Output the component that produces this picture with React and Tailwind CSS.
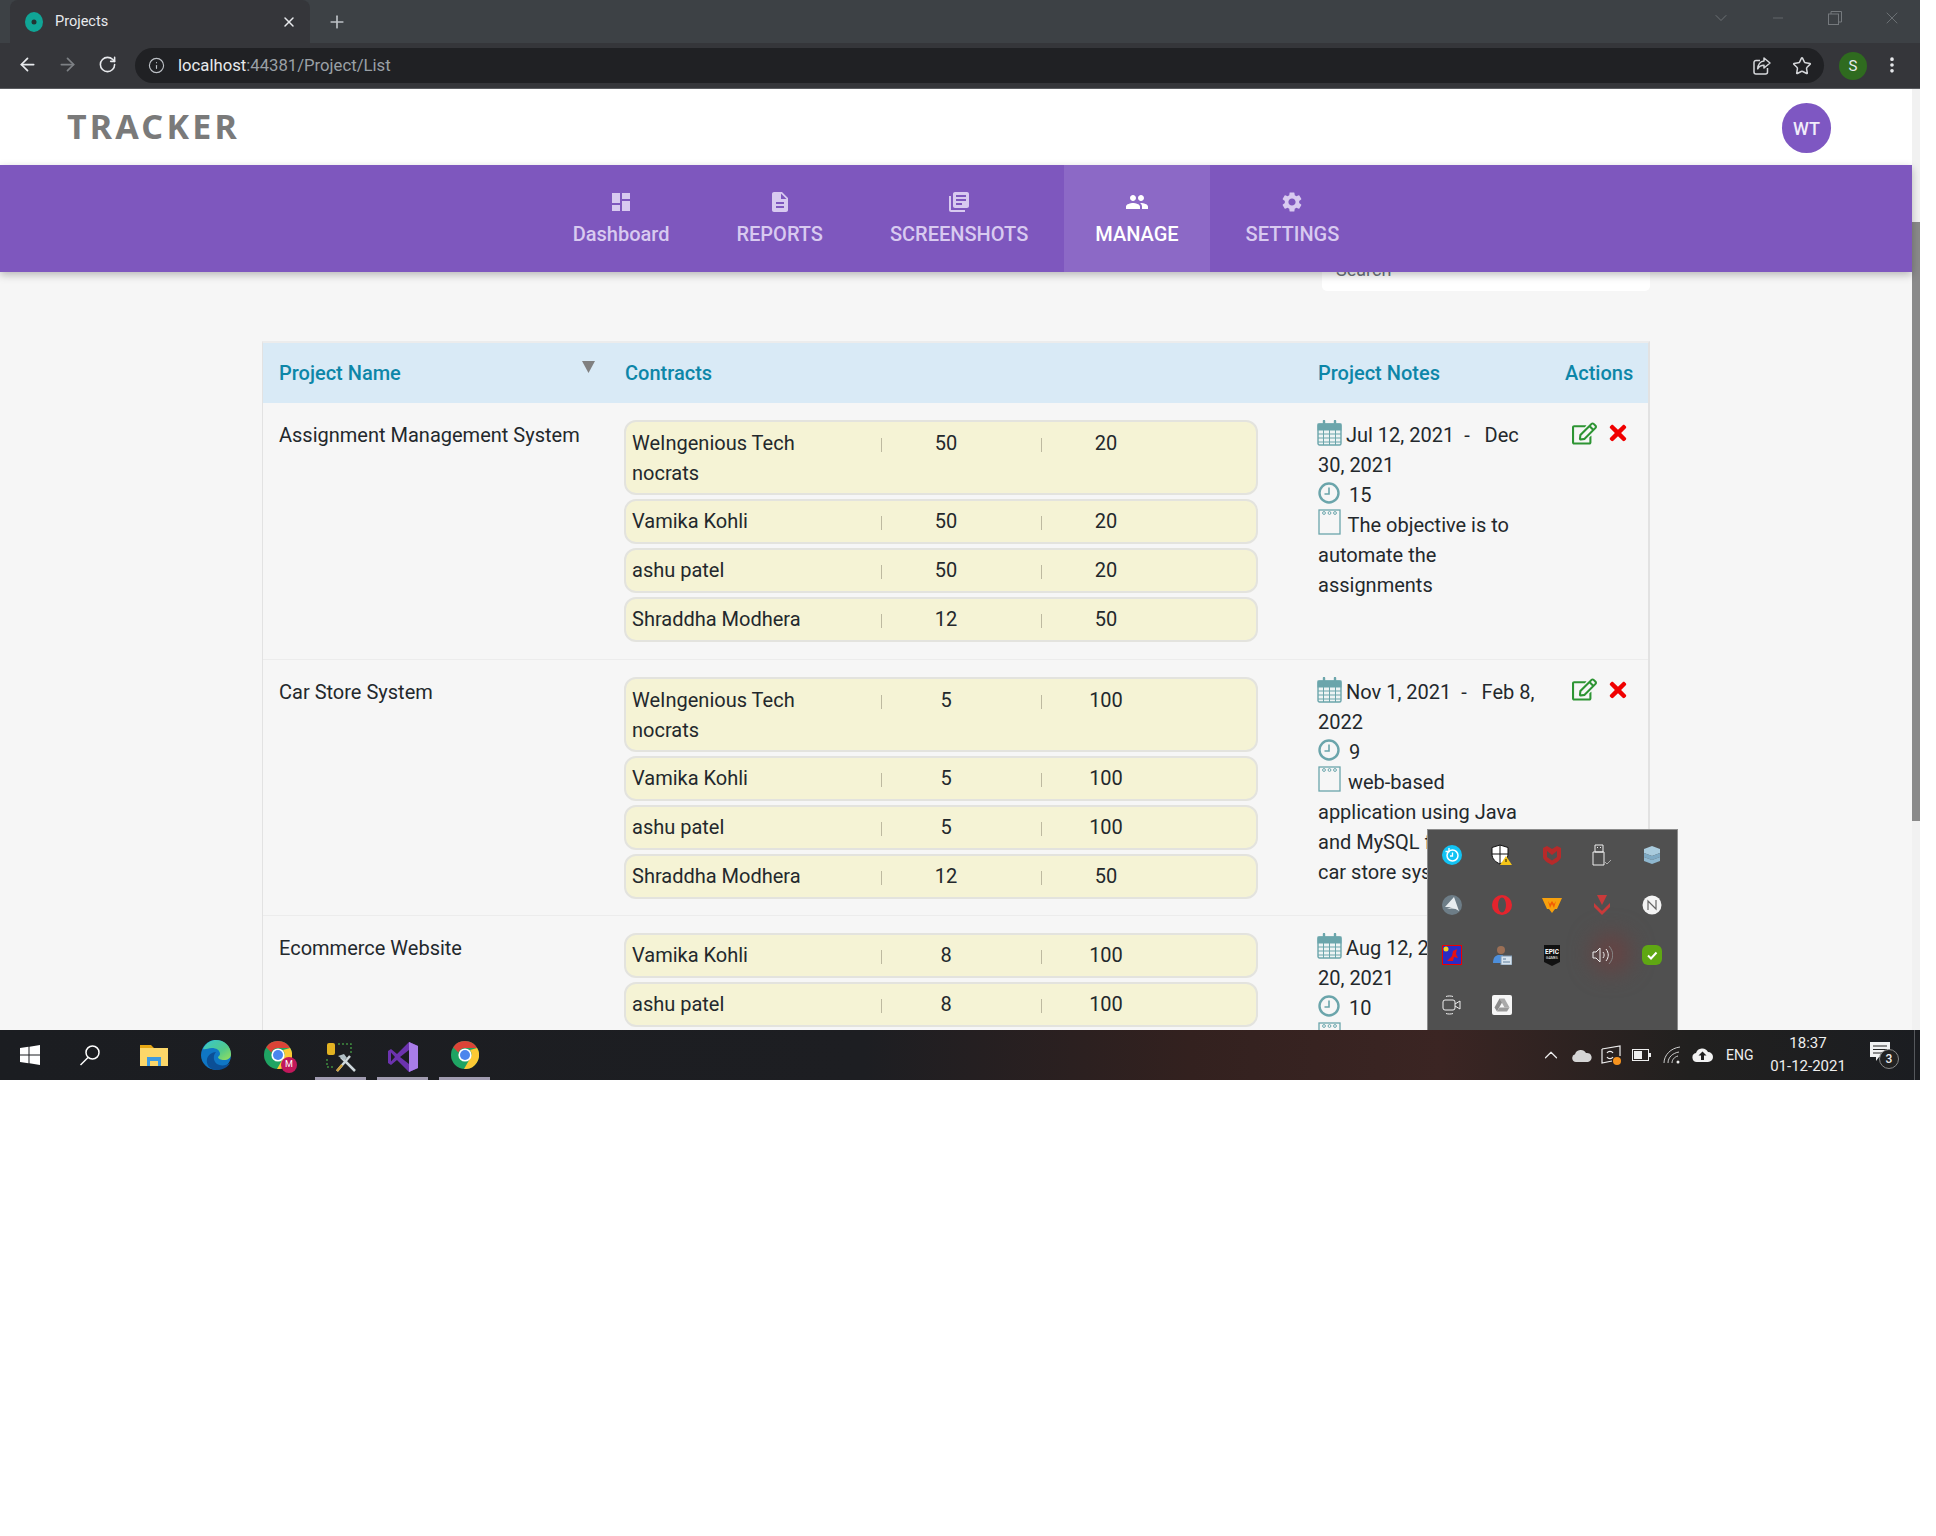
import React from "react";
import { ArrowLeft, ArrowRight, RotateCw, Info, Star, X, Plus, ChevronDown, Minus, ChevronUp, MoreVertical } from "lucide-react";
import { MdDashboard, MdDescription, MdLibraryBooks, MdPeople, MdSettings } from "react-icons/md";
import { FaRegEdit, FaTimes } from "react-icons/fa";

const Calendar = () => (
  <svg width="25" height="26" viewBox="0 0 25 26" className="-ml-[1px] -mr-[1px] inline-block align-[-4px]" fill="none" stroke="#6ba5ab">
    <rect x="1" y="4" width="23" height="21" rx="1.5" strokeWidth="1.4" fill="#eef4f4" />
    <rect x="1" y="4" width="23" height="6" fill="#6ba5ab" />
    <path d="M7 1v6M18 1v6" strokeWidth="2.4" strokeLinecap="round" />
    <path d="M1 14h23M1 18h23M1 22h23M6.5 10v15M12.5 10v15M18.5 10v15" strokeWidth="1" />
  </svg>
);
const Clock = () => (
  <svg width="22" height="22" viewBox="0 0 22 22" className="-mr-[1px] inline-block align-[-2px]" fill="none" stroke="#6ba5ab">
    <circle cx="11" cy="11" r="9.5" strokeWidth="2.4" />
    <path d="M11 5.5V12H6.5" strokeWidth="1.6" />
  </svg>
);
const Note = () => (
  <svg width="23" height="26" viewBox="0 0 23 26" className="-mt-[4px] mr-[2px] inline-block align-[-3px]" fill="#fff" stroke="#6ba5ab">
    <rect x="1" y="1" width="21" height="24" strokeWidth="1.3" fill="#f6f6f6" />
    <circle cx="6" cy="4" r="1.4" /><circle cx="11.5" cy="4" r="1.4" /><circle cx="17" cy="4" r="1.4" />
  </svg>
);

const ShareIcon = () => (
  <svg width="20" height="20" viewBox="0 0 20 20" fill="none" stroke="#d5d7da" strokeWidth="1.5">
    <path d="M15.5 12v4a2 2 0 0 1-2 2H4a2 2 0 0 1-2-2V6.5a2 2 0 0 1 2-2h4" />
    <path d="M12 2l6 5-6 5V9.2c-3 0-5 1.2-6.3 3.6C6 8.8 8.3 5.3 12 5z" strokeLinejoin="round" />
  </svg>
);

const ChromeLogo = ({ size = 28 }) => (
  <svg width={size} height={size} viewBox="0 0 28 28">
    <circle cx="14" cy="14" r="14" fill="#1fa463" />
    <path d="M14 0a14 14 0 0 1 12.1 7H14a7 7 0 0 0-6.6 4.6L2.2 6.2A14 14 0 0 1 14 0z" fill="#db4437" />
    <path d="M26.1 7A14 14 0 0 1 13 28l6-10.5A7 7 0 0 0 19 9z" fill="#fcc934" />
    <circle cx="14" cy="14" r="6.6" fill="#fff" />
    <circle cx="14" cy="14" r="5" fill="#4a85ed" />
  </svg>
);

const nav = [
  { label: "Dashboard", icon: MdDashboard },
  { label: "REPORTS", icon: MdDescription },
  { label: "SCREENSHOTS", icon: MdLibraryBooks },
  { label: "MANAGE", icon: MdPeople, active: true },
  { label: "SETTINGS", icon: MdSettings },
];

const rows = [
  {
    name: "Assignment Management System",
    contracts: [
      ["WeIngenious Tech", "nocrats", "50", "20"],
      ["Vamika Kohli", null, "50", "20"],
      ["ashu patel", null, "50", "20"],
      ["Shraddha Modhera", null, "12", "50"],
    ],
    from: "Jul 12, 2021",
    to: "Dec 30, 2021",
    hours: "15",
    note: "The objective is to automate the assignments",
  },
  {
    name: "Car Store System",
    contracts: [
      ["WeIngenious Tech", "nocrats", "5", "100"],
      ["Vamika Kohli", null, "5", "100"],
      ["ashu patel", null, "5", "100"],
      ["Shraddha Modhera", null, "12", "50"],
    ],
    from: "Nov 1, 2021",
    to: "Feb 8, 2022",
    hours: "9",
    note: "web-based application using Java and MySQL for\ncar store system",
  },
  {
    name: "Ecommerce Website",
    contracts: [
      ["Vamika Kohli", null, "8", "100"],
      ["ashu patel", null, "8", "100"],
    ],
    from: "Aug 12, 2021",
    to: "Dec 20, 2021",
    hours: "10",
    note: "Online shopping website",
  },
];

function Pill({ c }) {
  return (
    <div className={`${c[1] ? "h-[75px] pt-[6px]" : "h-[45px] pt-[5px]"} grid grid-cols-[249px_160px_160px] rounded-[12px] border-2 border-[#e3e3de] bg-[#f5f3d5] pl-[6px] leading-[30px]`}>
      <div className="whitespace-nowrap">
        {c[0]}
        {c[1] && <br />}
        {c[1]}
      </div>
      <Cell v={c[2]} />
      <Cell v={c[3]} />
    </div>
  );
}
function Cell({ v }) {
  return (
    <div className="flex h-[30px] items-start">
      <span className="mt-[10px] h-[14px] w-px bg-[#bdb9a0]" />
      <span className="w-[128px] text-center">{v}</span>
    </div>
  );
}

function Row({ r }) {
  return (
    <div className="flex h-[256.5px] border-b border-b-[#ececec] pt-[17px] leading-[30px]">
      <div className="w-[361px] pl-[16px]">{r.name}</div>
      <div className="flex w-[634px] flex-col gap-1">
        {r.contracts.map((c, i) => <Pill key={i} c={c} />)}
      </div>
      <div className="ml-[60px] w-[224px] whitespace-pre-line">
        <div><Calendar /> {r.from}&nbsp; - &nbsp; {r.to}</div>
        <div><Clock /> &nbsp;{r.hours}</div>
        <div><Note /> {r.note}</div>
      </div>
      <div className="ml-[30px] flex h-[26px] items-center gap-[9px]">
        <FaRegEdit size={25} color="#2d9433" />
        <FaTimes size={24} color="#f00000" />
      </div>
    </div>
  );
}

const TrayCell = ({ children }) => <div className="flex h-[50px] w-[50px] items-center justify-center">{children}</div>;

const trayIcons = [
  <svg width="20" height="20" viewBox="0 0 20 20" key="1"><circle cx="10" cy="10" r="10" fill="#12c3f4" /><circle cx="10.5" cy="10.5" r="5.5" fill="none" stroke="#fff" strokeWidth="1.5" /><path d="M10.5 7.5v3.5H8M3.5 6.5h3.5V3" fill="none" stroke="#fff" strokeWidth="1.3" /></svg>,
  <svg width="22" height="22" viewBox="0 0 22 22" key="2"><path d="M9 1l8 2.5V10c0 5-3.5 8-8 10-4.500-2-8-5-8-10V3.500z" fill="#fff" stroke="#111" /><path d="M9 1v19M1 10h16" stroke="#111" /><path d="M15 12l6 9H9z" fill="#f5c518" /><path d="M15 15v3" stroke="#111" /></svg>,
  <svg width="20" height="20" viewBox="0 0 20 20" key="3"><path d="M1 3l4-2 5 3 5-3 4 2v9c0 3-5 6-9 8-4-2-9-5-9-8z" fill="#b72a2a" /><path d="M5 6l5 4 5-4v6l-5 3.500-5-3.500z" fill="#505050" /></svg>,
  <svg width="22" height="22" viewBox="0 0 22 22" fill="none" stroke="#eee" key="4"><path d="M4 1h8v7H4zM2 8h11v13H2z" /><path d="M6.500 3v1M9.500 3v1" /><path d="M14 18l2 2 4-4" stroke="#aaa" /></svg>,
  <svg width="20" height="20" viewBox="0 0 20 20" key="5"><path d="M2 4l8-3 8 3v4l-8 3-8-3z" fill="#a9cbdd" /><path d="M2 8l8 3 8-3v4l-8 3-8-3z" fill="#7ea9c3" /><path d="M2 12l8 3 8-3v4l-8 3-8-3z" fill="#8fb8d0" /></svg>,
  <svg width="20" height="20" viewBox="0 0 20 20" key="6"><circle cx="10" cy="10" r="10" fill="#6d7d87" /><path d="M3 12L12 2l5 14c-3-3-8-3-12-2 2-1 5-2 8-1-3-1-7-1-10-1z" fill="#e8edf0" /></svg>,
  <svg width="20" height="20" viewBox="0 0 20 20" key="7"><circle cx="10" cy="10" r="10" fill="#e4242d" /><ellipse cx="10" cy="10" rx="4" ry="7.500" fill="#505050" /></svg>,
  <svg width="20" height="16" viewBox="0 0 20 16" key="8"><path d="M0 1h20l-5 11h-2l-3 4-3-4H5z" fill="#f7a10d" /><path d="M6 4l2 7 2-4 2 4 2-7-2 3-2-3-2 3z" fill="#f25c05" /></svg>,
  <svg width="16" height="20" viewBox="0 0 16 20" key="9"><path d="M3 0h10l-5 10z" fill="#c93a3a" /><path d="M0 8l8 8 8-8v4l-8 8-8-8z" fill="#c93a3a" /></svg>,
  <svg width="20" height="20" viewBox="0 0 20 20" key="10"><circle cx="10" cy="10" r="9.500" fill="#f4f4f4" /><path d="M6 15V6l8 8V5" fill="none" stroke="#666" strokeWidth="1.2" /></svg>,
  <svg width="20" height="20" viewBox="0 0 20 20" key="11"><rect width="20" height="20" fill="#ee0000" /><rect x="1" y="1" width="18" height="18" fill="#2b2bc4" /><circle cx="4" cy="4" r="2.500" fill="#f1d321" /><path d="M5 16l5-5 1-5 4-2-1 5 2 4-4-1-1 4z" fill="#e81010" /></svg>,
  <svg width="20" height="20" viewBox="0 0 20 20" key="12"><circle cx="9" cy="5" r="4" fill="#9b6f55" /><path d="M1 18c0-6 3-8 6-8h4v8z" fill="#4d8fdc" /><rect x="9" y="11" width="11" height="9" fill="#d7e3ee" stroke="#7f9ab3" /><path d="M11 14h3M11 17h7" stroke="#5f7f9c" /></svg>,
  <svg width="18" height="21" viewBox="0 0 18 21" key="13"><path d="M1 0h16v17l-8 4-8-4z" fill="#111" /><text x="9" y="9" fontSize="6.500" fontFamily="Roboto, sans-serif" fontWeight="700" fill="#fff" textAnchor="middle">EPIC</text><text x="9" y="14" fontSize="3.500" fontFamily="Roboto, sans-serif" fill="#fff" textAnchor="middle">GAMES</text></svg>,
  <svg width="21" height="20" viewBox="0 0 21 20" fill="none" stroke="#eee" key="14"><path d="M1 7v6h3l4 4V3L4 7z" /><path d="M11 7c1.500 2 1.500 4 0 6" /><path d="M14 4c3 4 3 8 0 12" /><path d="M17 1c5 6 5 12 0 18" stroke="#888" /></svg>,
  <svg width="20" height="20" viewBox="0 0 20 20" key="15"><rect width="20" height="20" rx="6" fill="#5fa713" /><path d="M6 10.500l3 3 5.500-6" fill="none" stroke="#fff" strokeWidth="2" /></svg>,
  <svg width="20" height="20" viewBox="0 0 20 20" fill="none" stroke="#eee" key="16"><rect x="1" y="5" width="12" height="10" rx="2" /><path d="M13 9l5-3v8l-5-3" /><path d="M4 1.500c2-.7 5-.7 7 0M4 18.500c2 .7 5 .7 7 0" /></svg>,
  <svg width="20" height="20" viewBox="0 0 20 20" key="17"><rect width="20" height="20" rx="2" fill="#f6f6f6" /><path d="M7.500 3.500h5l5 9h-5z" fill="#a9a9a9" /><path d="M7.500 3.500L2.500 12.500l2.500 4 5-9z" fill="#8a8a8a" /><path d="M5 16.500h10l2.500-4h-10z" fill="#9a9a9a" /></svg>,
];

export default function App() {
  return (
    <div className="relative h-[1080px] w-[1920px] overflow-hidden text-[20px] text-[#23282c] [font-family:Roboto,sans-serif]">
      {/* Tab strip */}
      <div className="flex h-[43px] items-end bg-[#3d4145]">
        <div className="ml-[10px] flex h-[43px] w-[300px] items-center rounded-t-[8px] bg-[#35363a] pl-[15px] pr-[13px]">
          <svg width="18" height="20" viewBox="0 0 18 20"><ellipse cx="9" cy="10" rx="9" ry="10" fill="#10a596" /><circle cx="9" cy="10" r="2.500" fill="#233" /></svg>
          <span className="ml-[12px] text-[14.5px] text-[#e8eaed]">Projects</span>
          <X size={16} color="#e8eaed" strokeWidth={2.2} className="ml-auto" />
        </div>
        <div className="ml-[17px] flex h-[43px] items-center"><Plus size={20} color="#bdc1c6" strokeWidth={2} /></div>
        <div className="ml-auto flex h-[36px] self-start">
          <div className="flex w-[57px] items-center justify-center"><ChevronDown size={20} color="#75797d" strokeWidth={1} /></div>
          <div className="flex w-[57px] items-center justify-center"><Minus size={16} color="#75797d" strokeWidth={1} /></div>
          <div className="flex w-[57px] items-center justify-center">
            <svg width="14" height="14" viewBox="0 0 14 14" fill="none" stroke="#75797d"><rect x=".5" y="3" width="10" height="10.500" /><path d="M3 3V.5h10.500V11H11" /></svg>
          </div>
          <div className="flex w-[57px] items-center justify-center"><X size={20} color="#75797d" strokeWidth={1} /></div>
        </div>
      </div>
      {/* Toolbar */}
      <div className="flex h-[46px] border-b border-b-[#5a5c60] bg-[#35363a] pl-[7px]">
        <div className="flex w-[40px] items-center justify-center pb-[2px]"><ArrowLeft size={21} color="#e8eaed" strokeWidth={2} /></div>
        <div className="flex w-[40px] items-center justify-center pb-[2px]"><ArrowRight size={21} color="#7d8084" strokeWidth={2} /></div>
        <div className="flex w-[40px] items-center justify-center pb-[2px]"><RotateCw size={19} color="#e8eaed" strokeWidth={2} /></div>
        <div className="ml-[8px] mt-[5px] flex h-[35px] w-[1689px] items-center rounded-full bg-[#202124] pl-[13px] pr-[12px]">
          <Info size={17} color="#bdc1c6" strokeWidth={1.6} />
          <span className="ml-[13px] text-[16.7px] text-[#e8eaed]">localhost<span className="text-[#9aa0a6]">:44381/Project/List</span></span>
          <div className="ml-auto flex items-center gap-[20px]">
            <ShareIcon />
            <Star size={20} color="#d5d7da" strokeWidth={1.8} />
          </div>
        </div>
        <div className="ml-[15px] mt-[9px] flex h-[28px] w-[28px] items-center justify-center rounded-full bg-[#2f6b1f] text-[15px] text-[#e8eaed]">S</div>
        <div className="ml-[15px] flex items-center pb-[2px]"><MoreVertical size={20} color="#e8eaed" strokeWidth={2.4} /></div>
      </div>
      {/* Page */}
      <div className="flex h-[941px]">
        <div className="flex w-[1912px] flex-col">
          <header className="flex h-[76px] items-center justify-between bg-white pl-[67px] pr-[81px]">
            <span className="-mt-[2px] text-[34px] font-bold tracking-[3.2px] text-[#7a7a7a] [font-family:'Noto_Sans',sans-serif]">TRACKER</span>
            <div className="mt-[2px] flex h-[50px] w-[49px] items-center justify-center rounded-full bg-[#7e57c2] text-[18px] font-medium text-[#f1ecfa]">WT</div>
          </header>
          <nav className="relative z-10 flex h-[107px] justify-center bg-[#7e57be] shadow-[0_3px_8px_rgba(0,0,0,0.25)]">
            {nav.map((n) => {
              const I = n.icon;
              return (
                <div key={n.label} className={`mx-[2px] flex flex-col items-center px-[31.5px] pt-[25px] font-medium leading-[24px] ${n.active ? "bg-[#8c69c6] text-white" : "text-[#d8caf0]"}`}>
                  <I size={24} />
                  <span className="mt-[8px] whitespace-nowrap text-[20px]">{n.label}</span>
                </div>
              );
            })}
          </nav>
          <main className="relative flex-1 overflow-hidden bg-[#f6f6f6]">
            <div className="mx-auto -mt-[22px] w-[1388px]">
              <div className="flex justify-end">
                <div className="h-[41px] w-[328px] rounded-[5px] bg-white pl-[14px] text-[18px] leading-[40px] text-[#6c757d]">Search</div>
              </div>
              <div className="mt-[50px] border-x border-r-2 border-t-2 border-x-[#e2e2e2] border-t-[#ececec]">
                <div className="flex h-[60px] items-center bg-[#d9eaf6] pl-[16px] font-medium text-[#0d86a8]">
                  <div className="relative w-[346px]">
                    Project Name
                    <svg width="13" height="12" viewBox="0 0 13 12" className="absolute left-[303px] top-[3px]"><path d="M0 0h13L6.500 12z" fill="#808080" /></svg>
                  </div>
                  <div className="w-[693px]">Contracts</div>
                  <div className="w-[247px]">Project Notes</div>
                  <div>Actions</div>
                </div>
                {rows.map((r) => <Row key={r.name} r={r} />)}
              </div>
            </div>
          </main>
        </div>
        <div className="w-[8px] bg-[#f1f1f1] pt-[133px]"><div className="h-[599px] bg-[#8a8a8a]" /></div>
      </div>
      {/* Tray overflow */}
      <div className="absolute left-[1427px] top-[829px] z-20 h-[201px] w-[251px] overflow-hidden border-x border-t border-[#8c8c8c] bg-[#505050]">
        <div className="absolute left-[165px] top-[105px] h-[36px] w-[36px] rounded-full bg-[#6a4040] blur-md" />
        <div className="relative -ml-[1px] grid grid-cols-[repeat(5,50px)]">
          {trayIcons.map((ic, i) => <TrayCell key={i}>{ic}</TrayCell>)}
        </div>
      </div>
      {/* Taskbar */}
      <div className="relative z-30 flex h-[50px] items-stretch bg-[linear-gradient(90deg,#1b1d21_0%,#1d1e22_45%,#33211f_62%,#3b2523_75%,#21201f_88%,#1b1d21_100%)] text-white">
        <div className="flex w-[60px] items-center justify-center">
          <svg width="20" height="20" viewBox="0 0 20 20" fill="#fff"><path d="M0 3l8.500-1.200V9.500H0zM9.500 1.700L20 0v9.500H9.500zM0 10.500h8.500v7.700L0 17zM9.500 10.500H20V20L9.500 18.300z" /></svg>
        </div>
        <div className="flex w-[60px] items-center justify-center">
          <svg width="22" height="22" viewBox="0 0 22 22" fill="none" stroke="#fff" strokeWidth="1.5"><circle cx="13.500" cy="8.500" r="6.500" /><path d="M9 13.500L1.500 21" /></svg>
        </div>
        <div className="flex w-[68px] items-center justify-center">
          <svg width="28" height="24" viewBox="0 0 28 24"><path d="M0 2h11l3 3h14v18H0z" fill="#e7a713" /><rect y="5" width="28" height="18" fill="#fcd769" /><path d="M7 23v-9h14v9h-3v-5h-8v5z" fill="#3d9be0" /></svg>
        </div>
        <div className="flex w-[56px] items-center justify-center">
          <svg width="30" height="30" viewBox="0 0 30 30">
            <defs>
              <linearGradient id="edgeg" x1="0" y1="0" x2="1" y2="1"><stop offset="0" stopColor="#37c6d0" /><stop offset=".6" stopColor="#52c98a" /><stop offset="1" stopColor="#9be05a" /></linearGradient>
            </defs>
            <circle cx="15" cy="15" r="15" fill="#0f76c4" />
            <path d="M2 9C5 2 11 0 15 0c8 0 15 6 15 14 0 4-3 6-7 6-3 0-6-1-6-3 1-1 2-2 2-3 0-4-4-6-8-6-4 0-7 2-9 1z" fill="url(#edgeg)" />
            <path d="M16 30c-8 0-11-6-10-11 1-4 5-7 9-7-3 3-3 9 1 12 3 2 9 2 13-1-2 4-7 7-13 7z" fill="#0b4f96" />
          </svg>
        </div>
        <div className="ml-[6px] flex w-[56px] items-center justify-center">
          <div className="relative h-[28px] w-[28px]">
            <ChromeLogo />
            <div className="absolute -bottom-[4px] -right-[5px] flex h-[16px] w-[16px] items-center justify-center rounded-full bg-[#c2185b] text-[9px] text-white">M</div>
          </div>
        </div>
        <div className="ml-[9px] flex w-[51px] flex-col items-center justify-end border-b-[3px] border-b-[#a09bb0] pb-[5px]">
          <svg width="30" height="30" viewBox="0 0 30 30">
            <rect x="1" y="1" width="8" height="12" rx="2" fill="#e3b322" />
            <path d="M12 2h13v11M1 17v8h8" fill="none" stroke="#3f8c3f" strokeWidth="1.500" strokeDasharray="2 2" />
            <path d="M11 29L24 14M15 15l14 14" stroke="#cfd8dc" strokeWidth="2.500" />
            <path d="M11 29l5-6" stroke="#d0a23c" strokeWidth="2.500" />
            <path d="M12 14l6-2 3 4-3 2z" fill="#b0bec5" />
          </svg>
        </div>
        <div className="ml-[11px] flex w-[51px] flex-col items-center justify-end border-b-[3px] border-b-[#a09bb0] pb-[5px]">
          <svg width="30" height="30" viewBox="0 0 30 30">
            <path d="M21 0l9 4v22l-9 4-12-12-6 5-3-2V9l3-2 6 5z" fill="#6c33af" />
            <path d="M21 0l9 4v22l-9 4z" fill="#a97de8" />
            <path d="M21 8v14l-9-7z" fill="#1b1d21" />
            <path d="M3 10.500L7 15l-4 4.500z" fill="#1b1d21" />
          </svg>
        </div>
        <div className="ml-[11px] flex w-[51px] flex-col items-center justify-end border-b-[3px] border-b-[#a09bb0] pb-[8px]">
          <ChromeLogo />
        </div>
        <div className="ml-auto flex items-center">
          <div className="flex w-[28px] justify-center"><ChevronUp size={22} color="#eee" strokeWidth={1.3} /></div>
          <div className="ml-[2px] flex w-[30px] justify-center">
            <svg width="20" height="13" viewBox="0 0 20 13"><path d="M4 13a4 4 0 0 1-1-7.800A6 6 0 0 1 14 4a4.500 4.500 0 0 1 2 9z" fill="#d5d5d5" /></svg>
          </div>
          <div className="flex w-[30px] justify-center">
            <svg width="22" height="22" viewBox="0 0 22 22" fill="none" stroke="#eee" strokeWidth="1.200"><path d="M1 5l18-3v10" /><path d="M1 5v14l10-2" /><path d="M6 9a3.500 3.500 0 0 1 6 0M12 13a3.500 3.500 0 0 1-6 0" /><circle cx="16" cy="17" r="4" fill="#f7931e" stroke="none" /></svg>
          </div>
          <div className="flex w-[30px] justify-center">
            <svg width="20" height="12" viewBox="0 0 20 12" fill="none" stroke="#eee"><rect x=".5" y=".5" width="16" height="11" /><rect x="2" y="2" width="8" height="8" fill="#eee" stroke="none" /><path d="M18 4v4" strokeWidth="2" /></svg>
          </div>
          <div className="flex w-[30px] justify-center">
            <svg width="18" height="18" viewBox="0 0 18 18" fill="none" stroke="#ccc" strokeWidth="1"><path d="M1 17C1 9 8 2 17 1M5 17c0-6 5-10 11-11M9 17c0-3 2-6 6-7" /><circle cx="15" cy="16" r="1.500" fill="#eee" stroke="none" /></svg>
          </div>
          <div className="flex w-[30px] justify-center">
            <svg width="21" height="14" viewBox="0 0 21 14"><path d="M5 14a4.500 4.500 0 0 1-1-8.900A6.500 6.500 0 0 1 16 4a5 5 0 0 1 0 10z" fill="#f2f2f2" /><path d="M10.500 3.500L6.500 7.500h2.500V12h3V7.500h2.500z" fill="#1e1e1e" /></svg>
          </div>
          <span className="ml-[9px] w-[29px] text-[14px] text-[#eee]">ENG</span>
          <div className="ml-[13px] flex w-[80px] flex-col items-center text-[15px] leading-[23px] text-[#eee]">
            <span>18:37</span>
            <span>01-12-2021</span>
          </div>
          <div className="relative ml-[22px] mr-[20px] h-[30px] w-[24px]">
            <svg width="22" height="20" viewBox="0 0 22 20" className="mt-[2px]"><path d="M0 0h20v15H9l-3 4v-4H0z" fill="#f2f2f2" /><path d="M3 4h14M3 7.500h14M3 11h10" stroke="#222" /></svg>
            <div className="absolute left-[9px] top-[9px] flex h-[20px] w-[20px] items-center justify-center rounded-full border border-[#888] bg-[#222] text-[12px] font-medium leading-none text-[#eee]">3</div>
          </div>
          <div className="mr-[5px] h-full w-px bg-[#55585c]" />
        </div>
      </div>
    </div>
  );
}
